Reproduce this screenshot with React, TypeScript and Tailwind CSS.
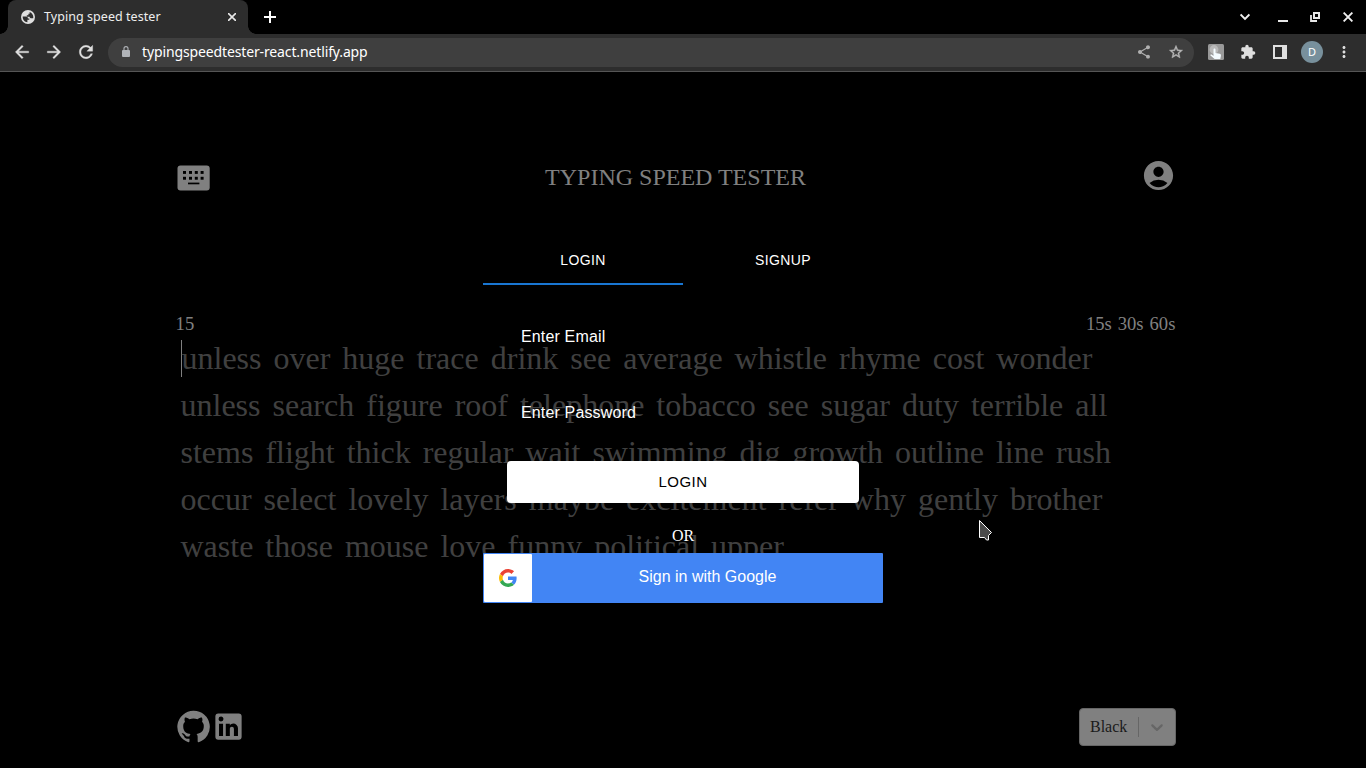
import React from "react";
import { MdAccountCircle, MdExtension, MdMoreVert, MdShare } from "react-icons/md";

const LINES = [
  "unless over huge trace drink see average whistle rhyme cost wonder",
  "unless search figure roof telephone tobacco see sugar duty terrible all",
  "stems flight thick regular wait swimming dig growth outline line rush",
  "occur select lovely layers maybe excitement refer why gently brother",
  "waste those mouse love funny political upper",
];

const TOOLBAR_PATHS = {
  back: "M20 11H7.83l5.59-5.59L12 4l-8 8 8 8 1.41-1.41L7.83 13H20v-2z",
  forward: "M12 4l-1.41 1.41L16.17 11H4v2h12.17l-5.58 5.59L12 20l8-8z",
  reload:
    "M17.65 6.35C16.2 4.9 14.21 4 12 4c-4.42 0-7.99 3.58-7.99 8s3.57 8 7.99 8c3.73 0 6.84-2.55 7.73-6h-2.08c-.82 2.33-3.04 4-5.65 4-3.31 0-6-2.69-6-6s2.69-6 6-6c1.66 0 3.14.69 4.22 1.78L13 11h7V4l-2.35 2.35z",
  star: "M22 9.24l-7.19-.62L12 2 9.19 8.63 2 9.24l5.46 4.73L5.82 21 12 17.27 18.18 21l-1.63-7.03L22 9.24zM12 15.4l-3.76 2.27 1-4.28-3.32-2.88 4.38-.38L12 6.1l1.71 4.04 4.38.38-3.32 2.88 1 4.28L12 15.4z",
};

function ToolbarIcon({ d, className, weight = 0.4 }: { d: string; className: string; weight?: number }) {
  return (
    <svg className={className} viewBox="0 0 24 24" fill="currentColor" stroke="currentColor" strokeWidth={weight}>
      <path d={d} />
    </svg>
  );
}

function TabStrip() {
  return (
    <div className="flex h-[34px] bg-black pl-2">
      <div className="relative flex h-[34px] w-[240px] items-center rounded-t-lg bg-[#2d2d2d] pl-[13px]">
        <div className="absolute bottom-0 -left-2 size-2 bg-[radial-gradient(circle_at_0_0,transparent_7.5px,#2d2d2d_8px)]" />
        <div className="absolute -right-2 bottom-0 size-2 bg-[radial-gradient(circle_at_100%_0,transparent_7.5px,#2d2d2d_8px)]" />
        <svg className="size-[14px] shrink-0" viewBox="0 0 14 14">
          <circle cx="7" cy="7" r="7" fill="#dfdfdf" />
          <path
            d="M1.7 6.6H4.8C6.2 6.6 6.9 7.3 6.9 8.4H8.3V9.8H6.4V12.3C3.7 12.2 1.6 9.9 1.7 6.6ZM8.6 1.9C10.8 2.6 12.3 4.6 12.3 7C12.3 7.5 12.2 7.9 12.1 8.2H9.8C9.1 8.2 8.6 7.6 8.6 6.8H5.8V5.2H7.4V3.8H8.6Z"
            fill="#2d2d2d"
          />
        </svg>
        <span className="mt-px ml-[9px] text-[12.5px] tracking-[0.05px] text-[#eeeeee]">Typing speed tester</span>
        <svg className="mr-3 ml-auto size-2" viewBox="0 0 8 8" stroke="#e8e8e8" strokeWidth="1.6">
          <path d="M0 0L8 8M8 0L0 8" />
        </svg>
      </div>
      <svg className="mt-[11px] ml-4 size-3" viewBox="0 0 12 12" stroke="#fff" strokeWidth="2">
        <path d="M6 0V12M0 6H12" />
      </svg>
      <div className="ml-auto flex pr-[13px]">
        <svg className="mt-[13px] h-2 w-[10px]" viewBox="0 0 10 8" fill="none" stroke="#f0f0f0" strokeWidth="1.9">
          <path d="M.6 1.4L5 5.8L9.4 1.4" />
        </svg>
        <div className="mt-5 ml-7 h-[2px] w-[10px] bg-[#e8e8e8]" />
        <svg className="mt-3 ml-[22px] size-[10px]" viewBox="0 0 10 10" fill="none" stroke="#e8e8e8">
          <path d="M4 1H9V6H4Z" strokeWidth="2" />
          <path d="M1 3V9H7" strokeWidth="1.8" />
        </svg>
        <svg className="mt-3 ml-[23px] size-[10px]" viewBox="0 0 10 10" stroke="#f0f0f0" strokeWidth="1.9">
          <path d="M.6 .6L9.4 9.4M9.4 .6L.6 9.4" />
        </svg>
      </div>
    </div>
  );
}

function Toolbar() {
  return (
    <div className="flex h-[38px] items-center border-b border-[#555555] bg-[#2d2d2d] pr-3 pb-px pl-3 text-[#dfdfdf]">
      <ToolbarIcon d={TOOLBAR_PATHS.back} className="size-5" />
      <ToolbarIcon d={TOOLBAR_PATHS.forward} className="ml-3 size-5" />
      <ToolbarIcon d={TOOLBAR_PATHS.reload} className="ml-3 size-5" />
      <div className="ml-3 flex h-[29px] w-[1086px] items-center rounded-full bg-[#3f3f3f] pr-[10px] pl-[14px]">
        <svg className="-mt-px h-[11px] w-2" viewBox="0 0 8 11">
          <path d="M2 4.5V2.6a2 2 0 0 1 4 0V4.5" fill="none" stroke="#b0b3b8" strokeWidth="1.1" />
          <rect y="4" width="8" height="7" rx="1" fill="#b0b3b8" />
        </svg>
        <span className="-mt-px ml-3 text-sm tracking-[-0.13px] text-white">typingspeedtester-react.netlify.app</span>
        <MdShare className="ml-auto size-4 text-[#b0b0b0]" />
        <ToolbarIcon d={TOOLBAR_PATHS.star} className="ml-4 size-4 text-[#b8b8b8]" weight={0.6} />
      </div>
      <svg className="ml-[14px] size-4" viewBox="0 0 16 16">
        <rect width="16" height="16" rx="1.5" fill="#999" />
        <circle cx="6" cy="5.5" r="4.4" fill="#b9b9b9" />
        <path
          d="M5.5 5.5c0-1.4 2-1.4 2 0V9l4.2.8c1 .2 1.4.9 1.2 1.9L12.3 15H6.6L2.5 11.6c-.5-.9.4-1.5 1.2-1L5.5 12Z"
          fill="#f4fbff"
        />
      </svg>
      <MdExtension className="ml-4 size-4" />
      <svg className="ml-[17px] size-[14px]" viewBox="0 0 14 14">
        <path fill="#dfdfdf" fillRule="evenodd" d="M0 0H14V14H0ZM2 2V12H9V2Z" />
      </svg>
      <div className="ml-[14px] flex size-[22px] items-center justify-center rounded-full bg-[#78909c] text-[11px] text-white">
        D
      </div>
      <MdMoreVert className="ml-3 size-[18px]" />
    </div>
  );
}

function KeyboardIcon() {
  return (
    <svg className="mt-px ml-px h-[26px] w-[33px]" viewBox="0 0 33 26">
      <rect x=".5" y=".4" width="32.2" height="25" rx="3" fill="#808080" />
      <g fill="#000">
        {[6, 12, 17.8, 23.6].map((x) => (
          <React.Fragment key={x}>
            <rect x={x} y="6" width="3" height="2.9" />
            <rect x={x} y="11.8" width="3" height="2.9" />
          </React.Fragment>
        ))}
        <rect x="11" y="17.6" width="11.4" height="1.7" />
      </g>
    </svg>
  );
}

function TypingPage() {
  return (
    <main className="ml-44 w-[1000px] font-['Liberation_Serif',serif] text-[#808080]">
      <header className="flex items-center justify-between pt-[86px]">
        <KeyboardIcon />
        <h1 className="text-2xl leading-[35px]">TYPING SPEED TESTER</h1>
        <MdAccountCircle className="mb-1 size-[35px]" />
      </header>
      <div className="mt-[115px] -ml-[0.4px] flex justify-between pr-[0.6px] text-[18.6px] leading-6">
        <span>15</span>
        <span className="flex gap-[6px]">
          <span>15s</span>
          <span>30s</span>
          <span>60s</span>
        </span>
      </div>
      <div className="mt-1 ml-[4.5px] text-[32px] leading-[37px] text-[#404040] [font-kerning:none] [font-variant-ligatures:none]">
        {LINES.map((line, row) => (
          <div key={row} className="mb-[10px] flex gap-3">
            {line.split(" ").map((word, i) => (
              <span key={i} className={row === 0 && i === 0 ? "border-l border-[#808080]" : ""}>
                {word}
              </span>
            ))}
          </div>
        ))}
      </div>
      <footer className="mt-[143px] flex items-center justify-between">
        <div className="mb-px flex">
          <svg className="size-[35px]" viewBox="0 0 24 24" fill="currentColor">
            <path d="M12 1.27a11 11 0 00-3.48 21.46c.55.09.73-.28.73-.55v-1.84c-3.03.64-3.67-1.46-3.67-1.46-.55-1.29-1.28-1.65-1.28-1.65-.92-.65.1-.65.1-.65 1.1 0 1.73 1.1 1.73 1.1.92 1.65 2.57 1.2 3.21.92a2 2 0 01.64-1.47c-2.47-.27-5.04-1.19-5.04-5.5 0-1.1.46-2.1 1.2-2.84a3.76 3.76 0 010-2.93s.91-.28 3.11 1.1c1.8-.49 3.7-.49 5.5 0 2.1-1.38 3.02-1.1 3.02-1.1a3.76 3.76 0 01.1 2.93c.83.74 1.2 1.74 1.2 2.94 0 4.21-2.57 5.13-5.04 5.4.45.37.82.92.82 2.02v3.03c0 .27.1.64.73.55A11 11 0 0012 1.27" />
          </svg>
          <svg className="size-[35px]" viewBox="0 0 24 24" fill="currentColor">
            <path d="M19 3a2 2 0 0 1 2 2v14a2 2 0 0 1-2 2H5a2 2 0 0 1-2-2V5a2 2 0 0 1 2-2h14m-.5 15.5v-5.3a3.26 3.26 0 0 0-3.26-3.26c-.85 0-1.84.52-2.32 1.3v-1.11h-2.79v8.37h2.79v-4.93c0-.77.62-1.4 1.39-1.4a1.4 1.4 0 0 1 1.4 1.4v4.93h2.79M6.88 8.56a1.68 1.68 0 0 0 1.68-1.68c0-.93-.75-1.69-1.68-1.69a1.69 1.69 0 0 0-1.69 1.69c0 .93.76 1.68 1.69 1.68m1.39 9.94v-8.37H5.5v8.37h2.77z" />
          </svg>
        </div>
        <div className="flex h-[38px] w-[97px] items-center rounded border border-[#666666] bg-[#808080] pl-[10px] text-base text-[#1a1a1a]">
          <span>Black</span>
          <div className="ml-[11px] h-5 w-px bg-[#666666]" />
          <svg className="ml-2 size-5" viewBox="0 0 20 20" fill="#666666">
            <path d="M4.516 7.548c0.436-0.446 1.043-0.481 1.576 0l3.908 3.747 3.908-3.747c0.533-0.481 1.141-0.446 1.574 0 0.436 0.445 0.408 1.197 0 1.615-0.406 0.418-4.695 4.502-4.695 4.502-0.217 0.223-0.502 0.335-0.787 0.335s-0.57-0.112-0.789-0.335c0 0-4.287-4.084-4.695-4.502s-0.436-1.17 0-1.615z" />
          </svg>
        </div>
      </footer>
    </main>
  );
}

function GoogleLogo() {
  return (
    <svg className="size-[18px]" viewBox="0 0 48 48">
      <path fill="#EA4335" d="M24 9.5c3.54 0 6.71 1.22 9.21 3.6l6.85-6.85C35.9 2.38 30.47 0 24 0 14.62 0 6.51 5.38 2.56 13.22l7.98 6.19C12.43 13.72 17.74 9.5 24 9.5z" />
      <path fill="#4285F4" d="M46.98 24.55c0-1.57-.15-3.09-.38-4.55H24v9.02h12.94c-.58 2.96-2.26 5.48-4.78 7.18l7.73 6c4.51-4.18 7.09-10.36 7.09-17.65z" />
      <path fill="#FBBC05" d="M10.53 28.59c-.48-1.45-.76-2.99-.76-4.59s.27-3.14.76-4.59l-7.98-6.19C.92 16.46 0 20.12 0 24c0 3.88.92 7.54 2.56 10.78l7.97-6.19z" />
      <path fill="#34A853" d="M24 48c6.48 0 11.93-2.13 15.89-5.81l-7.73-6c-2.15 1.45-4.92 2.3-8.16 2.3-6.26 0-11.57-4.22-13.47-9.91l-7.98 6.19C6.51 42.62 14.62 48 24 48z" />
    </svg>
  );
}

function AuthDialog() {
  return (
    <div className="absolute top-[165px] left-[483px] w-[400px] font-['Liberation_Sans',sans-serif] text-white">
      <div className="flex h-12 text-center text-sm leading-[46px] tracking-[0.4px]">
        <button className="w-[200px] border-b-2 border-[#1976d2]">LOGIN</button>
        <button className="w-[200px] border-b-2 border-transparent">SIGNUP</button>
      </div>
      <div className="flex flex-col gap-5 px-6 pt-6 pb-6 text-base tracking-[0.15px]">
        <label className="h-14 pl-[14px] leading-[55px]">Enter Email</label>
        <label className="h-14 pl-[14px] leading-[55px]">Enter Password</label>
        <button className="h-[42px] rounded bg-white text-[15px] tracking-[0.43px] text-black">LOGIN</button>
      </div>
      <div className="h-[26px] text-center font-['Liberation_Serif',serif] text-base leading-[18px]">OR</div>
      <button className="flex h-[50px] w-full rounded-[1px] bg-[#4285f4] p-px">
        <span className="flex size-12 items-center justify-center rounded-[1px] bg-white">
          <GoogleLogo />
        </span>
        <span className="grow pl-px text-base leading-[46px]">Sign in with Google</span>
      </button>
    </div>
  );
}

export default function App() {
  return (
    <div className="flex h-screen w-screen flex-col overflow-hidden bg-black font-['Noto_Sans','Open_Sans',sans-serif]">
      <TabStrip />
      <Toolbar />
      <div className="relative grow">
        <TypingPage />
        <AuthDialog />
        <svg className="absolute top-[447px] left-[978px] h-[23px] w-[15px]" viewBox="0 0 15 23">
          <path d="M1.5 1.5V18.5H6.5L8.5 21H10.5V16.5L13.5 13.5Z" fill="#4a4a4a" stroke="#fff" />
        </svg>
      </div>
    </div>
  );
}
